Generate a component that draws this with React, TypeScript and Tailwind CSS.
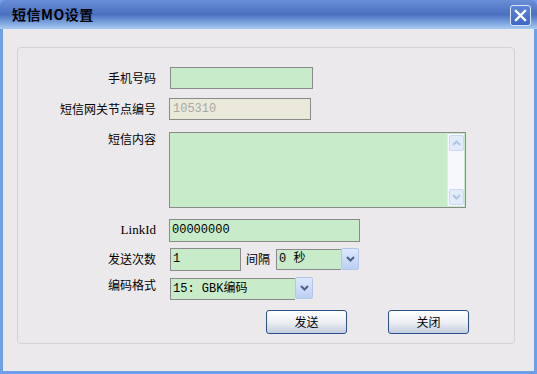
import React from "react";

const cjk = { fontFamily: '"Noto Sans CJK SC", "Liberation Sans", sans-serif' };
const mono = { fontFamily: '"Liberation Mono", "Noto Sans CJK SC", monospace' };

function Chevron({ color = "#4d6185" }: { color?: string }) {
  return (
    <svg width="9" height="6" viewBox="0 0 9 6">
      <path d="M1 1 L4.5 4.5 L8 1" stroke={color} strokeWidth="2" fill="none" />
    </svg>
  );
}

function DropButton() {
  return (
    <div className="w-[18px] h-[22px] flex items-center justify-center border border-[#b4c6ea] rounded-[2px] bg-gradient-to-b from-[#dde8fc] to-[#bcd0f4]">
      <Chevron />
    </div>
  );
}

function Label({ children, latin }: { children: React.ReactNode; latin?: boolean }) {
  return (
    <div
      className="w-[151px] pr-[13px] text-right text-[12px] leading-[22px] text-black shrink-0"
      style={latin ? { fontFamily: '"Liberation Serif", serif', fontSize: 13 } : cjk}
    >
      {children}
    </div>
  );
}

function Btn({ children }: { children: React.ReactNode }) {
  return (
    <div
      className="w-[81px] h-[24px] flex items-center justify-center border border-[#2a4f8a] rounded-[3px] bg-gradient-to-b from-[#ffffff] via-[#eef0f5] to-[#c3cede] text-[12px] text-black"
      style={cjk}
    >
      {children}
    </div>
  );
}

export default function App() {
  return (
    <div className="w-[537px] h-[374px] bg-[#6f9fe6] flex flex-col overflow-hidden">
      {/* title bar */}
      <div className="h-[29px] shrink-0 flex items-center pl-[12px] pr-[6px] bg-gradient-to-b from-[#6a8ed6] via-[#4a70c0] to-[#a6cbf2] rounded-t-[6px]">
        <div className="flex-1 text-[14px] font-bold text-black tracking-[0.5px]" style={cjk}>
          短信MO设置
        </div>
        <div className="w-[21px] h-[21px] mt-[2px] flex items-center justify-center rounded-[3px] border border-[#d8e4f8] bg-gradient-to-b from-[#5d86d8] to-[#3d67c2]">
          <svg width="13" height="13" viewBox="0 0 13 13">
            <path d="M2 2 L11 11 M11 2 L2 11" stroke="#ffffff" strokeWidth="2.4" strokeLinecap="square" />
          </svg>
        </div>
      </div>
      {/* client */}
      <div className="flex-1 mx-[3px] mb-[3px] bg-[#ece9ed] pt-[18px] pl-[14px] pr-[19px]">
        <div className="h-[297px] border border-[#d5d3cf] rounded-[4px] flex flex-col">
          {/* row 1 */}
          <div className="flex items-start mt-[19px]">
            <Label>手机号码</Label>
            <div className="w-[143px] h-[22px] border border-[#8a8a8a] bg-[#c8ecca] ml-[1px]" />
          </div>
          {/* row 2 */}
          <div className="flex items-start mt-[9px]">
            <Label>短信网关节点编号</Label>
            <div
              className="w-[142px] h-[22px] border border-[#8a8a8a] bg-[#ebe9d9] text-[12px] text-[#a8a8a8] leading-[20px] pl-[3px]"
              style={mono}
            >
              105310
            </div>
          </div>
          {/* row 3 */}
          <div className="flex items-start mt-[12px]">
            <Label>
              <span className="relative top-[-4px]">短信内容</span>
            </Label>
            <div className="w-[297px] h-[76px] border border-[#8a8a8a] bg-[#c8ecca] flex justify-end p-[1px]">
              <div className="w-[17px] h-full bg-[#f7f8fe] flex flex-col justify-between border-l border-[#e2e8f6] p-[1px]">
                <div className="w-[15px] h-[16px] rounded-[2px] border border-[#cbd9f4] bg-[#e2ebfc] flex items-center justify-center">
                  <svg width="9" height="6" viewBox="0 0 9 6">
                    <path d="M1 5 L4.5 1.5 L8 5" stroke="#b2c4e4" strokeWidth="2" fill="none" />
                  </svg>
                </div>
                <div className="w-[15px] h-[16px] rounded-[2px] border border-[#cbd9f4] bg-[#e2ebfc] flex items-center justify-center">
                  <Chevron color="#b2c4e4" />
                </div>
              </div>
            </div>
          </div>
          {/* row 4 */}
          <div className="flex items-start mt-[11px]">
            <Label latin>LinkId</Label>
            <div
              className="w-[191px] h-[23px] border border-[#8a8a8a] bg-[#c8ecca] text-[12px] leading-[21px] pl-[2px] text-black"
              style={mono}
            >
              00000000
            </div>
          </div>
          {/* row 5 */}
          <div className="flex items-start mt-[6px]">
            <Label>发送次数</Label>
            <div
              className="w-[71px] h-[23px] border border-[#8a8a8a] bg-[#c8ecca] text-[12px] leading-[21px] pl-[2px] text-black ml-[1px]"
              style={mono}
            >
              1
            </div>
            <div className="ml-[5px] mr-[6px] text-[12px] leading-[22px]" style={cjk}>
              间隔
            </div>
            <div className="flex">
              <div className="w-[65px] h-[21px] mt-[1px] border border-[#8a8a8a] border-r-0 bg-[#c8ecca] text-[12px] leading-[19px] pl-[2px]" style={mono}>
                0 秒
              </div>
              <DropButton />
            </div>
          </div>
          {/* row 6 */}
          <div className="flex items-start mt-[6px]">
            <Label>
              <span className="relative top-[-3px]">编码格式</span>
            </Label>
            <div className="flex ml-[1px]">
              <div className="w-[125px] h-[22px] border border-[#8a8a8a] border-r-0 bg-[#c8ecca] text-[12px] leading-[21px] pl-[2px] mt-[1px]" style={mono}>
                15: GBK编码
              </div>
              <DropButton />
            </div>
          </div>
          {/* buttons */}
          <div className="flex mt-[10px] pl-[248px] gap-[41px]">
            <Btn>发送</Btn>
            <Btn>关闭</Btn>
          </div>
        </div>
      </div>
    </div>
  );
}
